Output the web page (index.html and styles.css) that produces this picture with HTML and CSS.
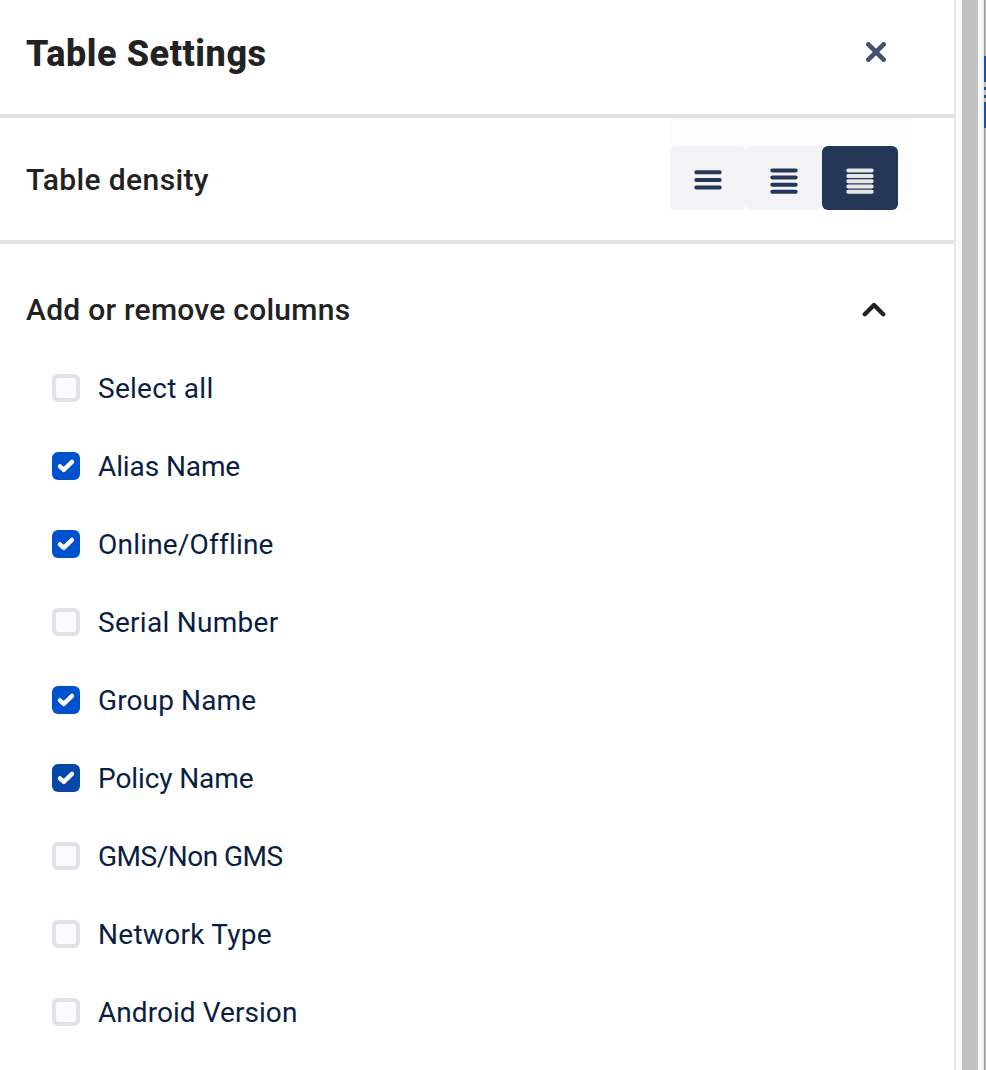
FILE: index.html
```html
<!DOCTYPE html>
<html lang="en">
<head>
<meta charset="utf-8">
<title>Table Settings</title>
<link rel="stylesheet" href="styles.css">
</head>
<body>
<div class="screen">
  <main class="panel">
    <header class="panel-header">
      <h1 class="title">Table Settings</h1>
      <svg class="close" width="20" height="20" viewBox="0 0 20 20"><path d="M2.4 2.4L17.6 17.6M17.6 2.4L2.4 17.6"/></svg>
    </header>
    <section class="density">
      <h2 class="subtitle subtitle-density">Table density</h2>
      <div class="density-group">
        <div class="density-button"><svg width="28" height="28" viewBox="0 0 28 28"><path d="M2.3 6.2H25.7M2.3 14H25.7M2.3 21.6H25.7"/></svg></div>
        <div class="density-button"><svg width="28" height="28" viewBox="0 0 28 28"><path d="M2.3 4.5H25.7M2.3 11.6H25.7M2.3 18.7H25.7M2.3 25.8H25.7"/></svg></div>
        <div class="density-button active"><svg width="28" height="28" viewBox="0 0 28 28"><path d="M2.3 4.5H25.7M2.3 10H25.7M2.3 15.3H25.7M2.3 20.6H25.7M2.3 25.8H25.7"/></svg></div>
      </div>
    </section>
    <section class="columns">
      <div class="columns-header">
        <h2 class="subtitle subtitle-columns">Add or remove columns</h2>
        <svg class="chevron" width="24" height="16" viewBox="0 0 24 16"><path d="M2.8 12.2L12 3L21.2 12.2"/></svg>
      </div>
      <ul class="column-list">
        <li class="option"><span class="box"></span><span class="label select-all">Select all</span></li>
        <li class="option"><span class="box checked"><svg class="tick" width="28" height="28" viewBox="0 0 28 28"><path d="M7.9 14.4L11.8 17.9L20 9.9"/></svg></span><span class="label alias">Alias Name</span></li>
        <li class="option"><span class="box checked"><svg class="tick" width="28" height="28" viewBox="0 0 28 28"><path d="M7.9 14.4L11.8 17.9L20 9.9"/></svg></span><span class="label online">Online/Offline</span></li>
        <li class="option"><span class="box"></span><span class="label serial">Serial Number</span></li>
        <li class="option"><span class="box checked"><svg class="tick" width="28" height="28" viewBox="0 0 28 28"><path d="M7.9 14.4L11.8 17.9L20 9.9"/></svg></span><span class="label group">Group Name</span></li>
        <li class="option"><span class="box checked hovered"><svg class="tick" width="28" height="28" viewBox="0 0 28 28"><path d="M7.9 14.4L11.8 17.9L20 9.9"/></svg></span><span class="label policy">Policy Name</span></li>
        <li class="option"><span class="box"></span><span class="label gms">GMS/Non GMS</span></li>
        <li class="option"><span class="box"></span><span class="label network">Network Type</span></li>
        <li class="option"><span class="box"></span><span class="label android">Android Version</span></li>
      </ul>
    </section>
  </main>
  <div class="scroll-track"><div class="scroll-thumb"></div></div>
  <div class="page-edge"></div>
  <div class="backdrop">
    <div class="backdrop-button"><span class="glyph-edge"></span></div>
  </div>
</div>
</body>
</html>
```
FILE: styles.css
```css
* { box-sizing: border-box; }
body { margin: 0; background: #fff; font-family: Roboto, "Noto Sans", sans-serif; overflow: hidden; }
h1, h2, ul { margin: 0; padding: 0; }
svg { display: block; fill: none; stroke-linecap: round; stroke-linejoin: round; }
.screen { display: flex; width: 986px; height: 1070px; overflow: hidden; }
.panel { width: 954px; flex: none; background: #fff; }
.panel-header { height: 118px; padding: 0 68px 14px 26px; border-bottom: 4px solid #dfe3e6; display: flex; align-items: flex-start; justify-content: space-between; }
.title { padding-top: 33px; font-size: 36px; line-height: 42px; font-weight: 800; letter-spacing: 0.55px; color: #222; white-space: nowrap; }
.close { margin-top: 42px; stroke: #42526e; stroke-width: 4.7; }
.density { height: 126px; padding: 0 42px 0 26px; border-bottom: 4px solid #dfe3e6; display: flex; justify-content: space-between; }
.subtitle { font-size: 30px; line-height: 36px; font-weight: 500; color: #222; white-space: nowrap; }
.subtitle-density { padding-top: 44px; letter-spacing: 0.38px; }
.subtitle-columns { padding-top: 1px; letter-spacing: 0.25px; }
.density-group { width: 242px; height: 92px; padding-top: 28px; background: #fcfcfc; display: flex; }
.density-button { width: 76px; height: 64px; padding-top: 4px; border-radius: 6px; background: #f3f3f5; display: flex; align-items: center; justify-content: center; }
.density-button svg { stroke: #243757; stroke-width: 4; }
.density-button.active { background: #243757; }
.density-button.active svg { stroke: #e8e8e6; }
.columns { padding: 47px 68px 0 26px; }
.columns-header { height: 36px; display: flex; justify-content: space-between; }
.chevron { margin-top: 11px; stroke: #222; stroke-width: 4.4; }
.column-list { list-style: none; padding: 22px 0 0 26px; }
.option { height: 78px; display: flex; align-items: center; gap: 18px; }
.box { flex: none; width: 28px; height: 28px; border: 4px solid #dfe2e7; border-radius: 6px; background: #fafbfd; }
.box.checked { border: 0; background: #0052cc; }
.box.hovered { background: #0747a6; }
.tick { stroke: #fff; stroke-width: 4.3; }
.label { padding-top: 2px; font-size: 28px; line-height: 36px; color: #091e42; white-space: nowrap; }
.select-all { letter-spacing: 0.28px; }
.alias { letter-spacing: -0.1px; }
.online { letter-spacing: 0.2px; }
.serial { letter-spacing: 0.28px; }
.group { letter-spacing: 0.12px; }
.policy { letter-spacing: -0.1px; }
.gms { letter-spacing: -0.5px; }
.network { letter-spacing: 0.28px; }
.android { letter-spacing: 0.06px; }
.scroll-track { flex: none; width: 28px; border-left: 2px solid #e8e8e8; padding: 0 4px 0 6px; background: #fafafa; }
.scroll-thumb { width: 16px; height: 100%; background: #c1c1c1; }
.page-edge { width: 2px; flex: none; background: #eee; }
.backdrop { width: 2px; flex: none; padding-top: 56px; background: linear-gradient(90deg, #999 0 1px, #bbb 1px 2px); }
.backdrop-button { height: 72px; padding-top: 26px; background: #1352a8; }
.glyph-edge { display: block; height: 20px; background: linear-gradient(#c1c1c1 0 5px, #1352a8 5px 8px, #c1c1c1 8px 13px, #1352a8 13px 16px, #c1c1c1 16px 20px); }
```
